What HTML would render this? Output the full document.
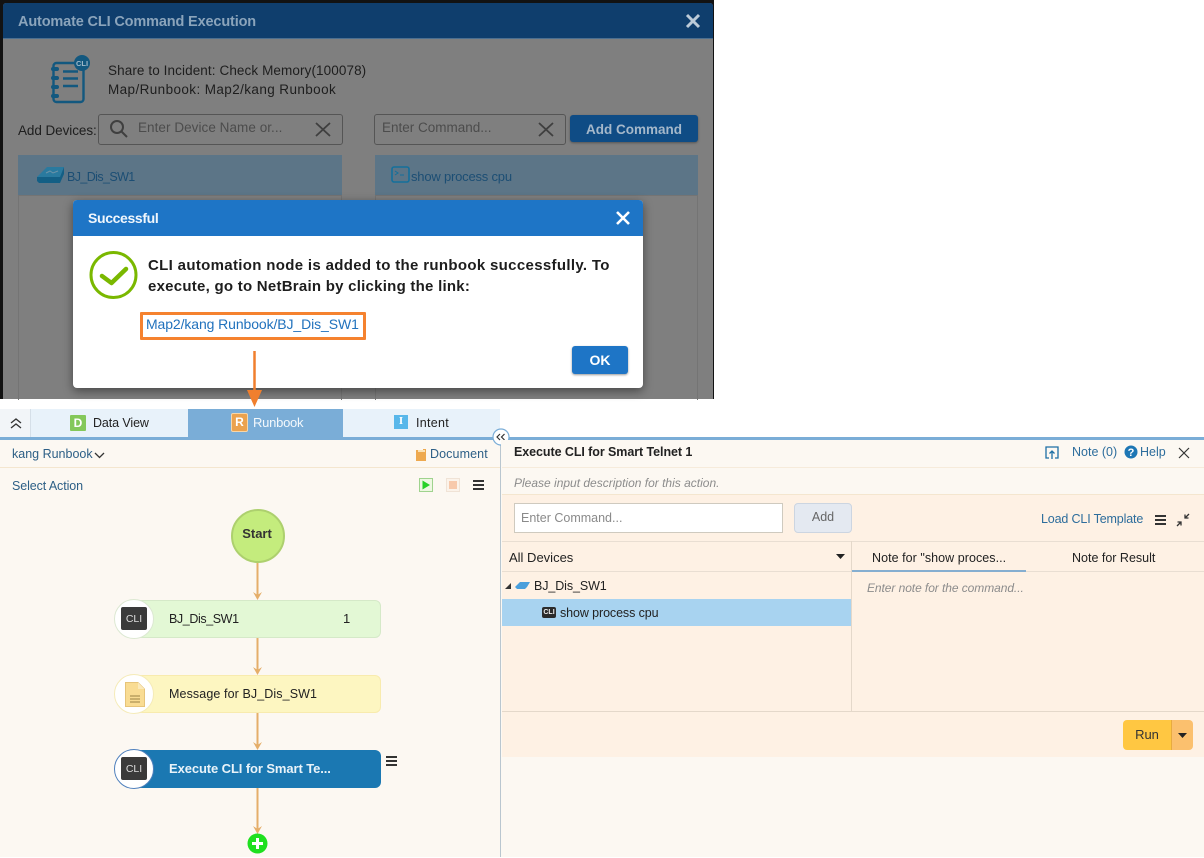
<!DOCTYPE html>
<html><head><meta charset="utf-8"><style>
html,body{margin:0;padding:0;background:#fff}
#p{position:relative;width:1204px;height:858px;overflow:hidden;font-family:"Liberation Sans",sans-serif;background:#fff}
#p div,#p svg{position:absolute}
.t{white-space:nowrap;line-height:18px;height:18px;font-size:13px;color:#222}
</style></head><body><div id="p">
<!-- top dark screen -->
<div style="left:0;top:0;width:714px;height:399px;background:#121212"></div>
<div style="left:3px;top:3px;width:710px;height:396px;background:#7f7f7f;border-radius:3px 3px 0 0"></div>
<div style="left:3px;top:3px;width:710px;height:35px;background:#0f3e6d;border-bottom:1px solid #4c6f90;border-radius:3px 3px 0 0"></div>
<div class="t" style="left:18px;top:13px;font-size:14.5px;font-weight:bold;color:#8ba4bb;letter-spacing:-.15px">Automate CLI Command Execution</div>
<svg style="left:685px;top:13px" width="16" height="16"><path d="M2 2L14 14M14 2L2 14" stroke="#bccbd8" stroke-width="3"/></svg>
<svg style="left:50px;top:54px" width="42" height="50" viewBox="0 0 42 50" fill="none">
<rect x="3.5" y="9" width="30" height="39" rx="3" stroke="#13587f" stroke-width="2.4"/>
<path d="M13 17.500H28M13 24.500H28M13 32H28" stroke="#13587f" stroke-width="2.600"/>
<path d="M3 15h4M3 24h4M3 33h4M3 42h4" stroke="#13587f" stroke-width="4" stroke-linecap="round"/>
<circle cx="32" cy="9" r="8" fill="#13587f"/>
<text x="32" y="12" text-anchor="middle" font-size="7.5" font-weight="bold" fill="#9fb9c9" font-family="Liberation Sans">CLI</text></svg>
<div class="t" style="left:108px;top:62px;font-size:13.5px;color:#1e1e1e;letter-spacing:.1px">Share to Incident: Check Memory(100078)</div>
<div class="t" style="left:108px;top:81px;font-size:13.5px;color:#1e1e1e;letter-spacing:.4px">Map/Runbook: Map2/kang Runbook</div>
<div class="t" style="left:18px;top:122px;font-size:13.5px;color:#1e1e1e;letter-spacing:-.07px">Add Devices:</div>
<div style="left:98px;top:114px;width:243px;height:29px;border:1px solid #555;border-radius:3px"></div>
<svg style="left:108px;top:118px" width="22" height="20" fill="none"><circle cx="9" cy="9" r="6" stroke="#3f3f3f" stroke-width="2"/><path d="M13.5 13.5L19 19" stroke="#3f3f3f" stroke-width="2"/></svg>
<div class="t" style="left:138px;top:119px;font-size:13.5px;color:#4c4c4c;letter-spacing:.05px">Enter Device Name or...</div>
<svg style="left:315px;top:122px" width="16" height="15"><path d="M1 1L15 14M15 1L1 14" stroke="#3f3f3f" stroke-width="1.8"/></svg>
<div style="left:374px;top:114px;width:190px;height:29px;border:1px solid #555;border-radius:3px"></div>
<div class="t" style="left:382px;top:119px;font-size:13.5px;color:#4c4c4c">Enter Command...</div>
<svg style="left:538px;top:122px" width="16" height="15"><path d="M1 1L15 14M15 1L1 14" stroke="#3f3f3f" stroke-width="1.8"/></svg>
<div style="left:570px;top:115px;width:128px;height:27px;background:#0f4c85;border-radius:3px;box-shadow:0 1px 2px #555"></div>
<div class="t" style="left:570px;top:121px;width:128px;text-align:center;font-size:13.5px;font-weight:bold;color:#a5b8ca">Add Command</div>
<div style="left:18px;top:155px;width:324px;height:40px;background:#5c7587"></div>
<div style="left:375px;top:155px;width:323px;height:40px;background:#5c7587"></div>
<div style="left:18px;top:195px;width:322px;height:204px;border:1px solid #747474;border-bottom:0"></div>
<div style="left:375px;top:195px;width:321px;height:204px;border:1px solid #747474;border-bottom:0"></div>
<svg style="left:36px;top:165px" width="30" height="20"><path d="M1 12L11 2H28L24 12Z" fill="#2a7a9f"/><path d="M1 12H24L28 2V9L24 18H3L1 16Z" fill="#135f85"/><path d="M10 8l4-2 3 2 5-2" stroke="#6c93a8" stroke-width="1" fill="none"/></svg>
<div class="t" style="left:67px;top:168px;font-size:12.5px;color:#1c4e74;letter-spacing:-.6px">BJ_Dis_SW1</div>
<svg style="left:391px;top:166px" width="20" height="18" fill="none"><rect x="1" y="1" width="17" height="15" rx="2" stroke="#14709c" stroke-width="1.6"/><path d="M4 5l3 2-3 2M9 9h4" stroke="#14709c"/></svg>
<div class="t" style="left:411px;top:168px;font-size:13px;color:#1c4e74;letter-spacing:-.2px">show process cpu</div>
<!-- success dialog -->
<div style="left:73px;top:200px;width:570px;height:188px;background:#fff;border-radius:4px;box-shadow:0 3px 10px rgba(0,0,0,.45)"></div>
<div style="left:73px;top:200px;width:570px;height:36px;background:#1e75c6;border-radius:4px 4px 0 0"></div>
<div class="t" style="left:88px;top:209px;font-size:14px;font-weight:bold;color:#f0f6fc;letter-spacing:-.35px">Successful</div>
<svg style="left:615px;top:210px" width="16" height="16"><path d="M2 2L14 14M14 2L2 14" stroke="#fff" stroke-width="2.6"/></svg>
<svg style="left:89px;top:250px" width="50" height="50" fill="none"><circle cx="24.500" cy="25" r="22.500" stroke="#7ab800" stroke-width="3"/><path d="M13 26L22.500 33L37 19" stroke="#7ab800" stroke-width="4.500" stroke-linecap="round" stroke-linejoin="round"/></svg>
<div class="t" style="left:148px;top:257px;font-size:15px;font-weight:bold;color:#1d1d1d;letter-spacing:.33px">CLI automation node is added to the runbook successfully. To</div>
<div class="t" style="left:148px;top:278px;font-size:15px;font-weight:bold;color:#1d1d1d;letter-spacing:.25px">execute, go to NetBrain by clicking the link:</div>
<div style="left:140px;top:312px;width:220px;height:22px;border:3px solid #f5822f;border-radius:1px"></div>
<div class="t" style="left:146px;top:315px;font-size:14px;color:#2172bd;letter-spacing:-.1px">Map2/kang Runbook/BJ_Dis_SW1</div>
<div style="left:572px;top:346px;width:56px;height:28px;background:#1e75c6;border-radius:3px;box-shadow:0 1px 2px #999"></div>
<div class="t" style="left:572px;top:351px;width:56px;text-align:center;font-size:14px;font-weight:bold;color:#fff">OK</div>
<!-- tabs -->
<div style="left:0;top:409px;width:500px;height:28px;background:#e8f2fa"></div>
<div style="left:0;top:409px;width:30px;height:28px;background:#f2f5f8;border-right:1px solid #d5dfe8"></div>
<svg style="left:9px;top:417px" width="14" height="13" fill="none"><path d="M2 6L7 2L12 6M2 11L7 7L12 11" stroke="#333" stroke-width="1.3"/></svg>
<div style="left:188px;top:409px;width:155px;height:28px;background:#7aadd7"></div>
<div style="left:70px;top:415px;width:16px;height:16px;background:#84c85a;border-radius:1px;color:#fff;font-size:12px;font-weight:bold;text-align:center;line-height:16px">D</div>
<div class="t" style="left:93px;top:414px;font-size:12.5px;color:#222;letter-spacing:-.1px">Data View</div>
<div style="left:231px;top:413px;width:15px;height:17px;background:#eba24e;border:1px solid #f7d6a8;border-radius:2px;color:#fff;font-size:12px;font-weight:bold;text-align:center;line-height:17px">R</div>
<div class="t" style="left:253px;top:414px;font-size:13px;color:#f3f8fc;letter-spacing:-.25px">Runbook</div>
<div style="left:394px;top:415px;width:14px;height:14px;background:#58b7ea;color:#fff;font-size:11px;font-weight:bold;text-align:center;line-height:13px;font-family:'Liberation Serif',serif">I</div>
<div class="t" style="left:416px;top:414px;font-size:12.5px;color:#222;letter-spacing:.3px">Intent</div>
<div style="left:0;top:437px;width:1204px;height:3px;background:#7aadd7"></div>
<!-- left panel -->
<div style="left:0;top:440px;width:500px;height:418px;background:#fcf8f2"></div>
<div style="left:0;top:467px;width:500px;height:1px;background:#f4e6cf"></div>
<div style="left:500px;top:440px;width:1px;height:418px;background:#b9c6cf"></div>
<div class="t" style="left:12px;top:445px;font-size:12.5px;color:#2d5f86">kang Runbook</div>
<svg style="left:94px;top:451px" width="12" height="8" fill="none"><path d="M1 2L5.5 6.5L10 2" stroke="#333" stroke-width="1.3"/></svg>
<svg style="left:415px;top:448px" width="12" height="14"><path d="M1 2H8V1H11V13H1Z" fill="#eea94f"/><rect x="3" y="2" width="7" height="2" fill="#fbe2b5"/></svg>
<div class="t" style="left:430px;top:445px;font-size:12.5px;color:#2d5f86;letter-spacing:.1px">Document</div>
<div class="t" style="left:12px;top:477px;font-size:12.5px;color:#2d5f86;letter-spacing:-.1px">Select Action</div>
<svg style="left:419px;top:478px" width="14" height="14"><rect x=".5" y=".5" width="13" height="13" fill="#eef8e2" stroke="#9fd38e"/><path d="M3.5 2.5L11 7L3.5 11.5Z" fill="#27d127"/></svg>
<svg style="left:446px;top:478px" width="14" height="14"><rect x=".5" y=".5" width="13" height="13" fill="#fbf3ea" stroke="#f0e3d6"/><rect x="3" y="3" width="8" height="8" fill="#f7c9ab"/></svg>
<svg style="left:473px;top:480px" width="11" height="10"><path d="M0 1H11M0 5H11M0 9H11" stroke="#333" stroke-width="1.9"/></svg>
<!-- collapse -->
<svg style="left:492px;top:428px" width="18" height="18" fill="none"><circle cx="9" cy="9" r="8" fill="#fff" stroke="#7aadd7" stroke-width="1.2"/><path d="M8 6L5 9L8 12M12.5 6L9.5 9L12.5 12" stroke="#333" stroke-width="1.2"/></svg>
<!-- flow -->
<svg style="left:100px;top:500px" width="300" height="358" fill="none">
<path d="M157.500 61V98M157.500 137V173M157.500 212V248M157.500 288V332" stroke="#e5ae6a" stroke-width="2"/>
<path d="M153 92L157.500 95L162 92L157.500 100ZM153 167L157.500 170L162 167L157.500 175ZM153 242L157.500 245L162 242L157.500 250ZM153 326L157.500 329L162 326L157.500 334Z" fill="#e5ae6a"/>
</svg>
<div style="left:231px;top:509px;width:50px;height:50px;border:2px solid #add06e;border-radius:50%;background:#c4ec7d"></div>
<div class="t" style="left:230px;top:525px;width:54px;text-align:center;font-size:13px;font-weight:bold;color:#333">Start</div>
<div style="left:130px;top:600px;width:249px;height:36px;background:#e3f8d5;border:1px solid #d5e9c8;border-radius:6px"></div>
<div style="left:114px;top:599px;width:38px;height:38px;border:1px solid #dce8d2;border-radius:50%;background:#fff"></div>
<div style="left:121px;top:607px;width:26px;height:23px;background:#3a3a3a;border-radius:2px;color:#ddd;font-size:10.5px;text-align:center;line-height:25px">CLI</div>
<div class="t" style="left:169px;top:610px;font-size:12.5px;color:#222;letter-spacing:-.4px">BJ_Dis_SW1</div>
<div class="t" style="left:343px;top:610px;font-size:13px;color:#222">1</div>
<div style="left:130px;top:675px;width:249px;height:36px;background:#fdf6c1;border:1px solid #f8ebae;border-radius:6px"></div>
<div style="left:114px;top:674px;width:38px;height:38px;border:1px solid #f5ebb8;border-radius:50%;background:#fff"></div>
<svg style="left:124px;top:681px" width="22" height="28"><path d="M1.500 1.500H14L20.500 8V25.500H1.500Z" fill="#f9dc93" stroke="#e6c47a"/><path d="M14 1.500V8H20.500" fill="#fbe9b9"/><path d="M6 15H16M6 18H16M6 21H16" stroke="#9a8246"/></svg>
<div class="t" style="left:169px;top:685px;font-size:12.5px;color:#222;letter-spacing:.1px">Message for BJ_Dis_SW1</div>
<div style="left:130px;top:750px;width:251px;height:38px;background:#1b78b2;border-radius:6px"></div>
<div style="left:114px;top:749px;width:38px;height:38px;border:1px solid #4f80bd;border-radius:50%;background:#fff"></div>
<div style="left:121px;top:757px;width:26px;height:23px;background:#3a3a3a;border-radius:2px;color:#ddd;font-size:10.5px;text-align:center;line-height:25px">CLI</div>
<div class="t" style="left:169px;top:760px;font-size:13px;font-weight:bold;color:#e9f3f9;letter-spacing:-.1px">Execute CLI for Smart Te...</div>
<svg style="left:386px;top:756px" width="11" height="10"><path d="M0 1H11M0 5H11M0 9H11" stroke="#333" stroke-width="1.9"/></svg>
<svg style="left:247px;top:833px" width="21" height="21"><circle cx="10.500" cy="10.500" r="10" fill="#1fe01f"/><path d="M10.500 5V16M5 10.500H16" stroke="#fff" stroke-width="3"/></svg>
<!-- right panel -->
<div style="left:501px;top:440px;width:703px;height:418px;background:#fcf8f2"></div>
<div style="left:502px;top:467px;width:702px;height:1px;background:#f6ebdb"></div>
<div style="left:502px;top:494px;width:702px;height:263px;background:#fef1e4"></div>
<div style="left:502px;top:494px;width:702px;height:1px;background:#f4e6cf"></div>
<div style="left:502px;top:541px;width:702px;height:1px;background:#e9ded2"></div>
<div style="left:502px;top:571px;width:702px;height:1px;background:#e9ded2"></div>
<div style="left:502px;top:711px;width:702px;height:1px;background:#e4d8ca"></div>
<div style="left:851px;top:541px;width:1px;height:170px;background:#e4d8ca"></div>
<div class="t" style="left:514px;top:443px;font-size:12.5px;font-weight:bold;color:#222;letter-spacing:-.07px">Execute CLI for Smart Telnet 1</div>
<svg style="left:1044px;top:445px" width="16" height="15" fill="none"><path d="M5 13H2V2H14V13H11" stroke="#1d6fa5" stroke-width="1.3"/><path d="M8 14V6M5.500 8.500L8 6L10.500 8.500" stroke="#1d6fa5" stroke-width="1.300"/></svg>
<div class="t" style="left:1072px;top:443px;font-size:12.5px;color:#2d6d9c">Note (0)</div>
<svg style="left:1124px;top:445px" width="14" height="14"><circle cx="7" cy="7" r="6.500" fill="#1d76b4"/><text x="7" y="11" text-anchor="middle" font-size="11" font-weight="bold" fill="#fff" font-family="Liberation Sans">?</text></svg>
<div class="t" style="left:1140px;top:443px;font-size:12.5px;color:#2d6d9c">Help</div>
<svg style="left:1178px;top:447px" width="12" height="12"><path d="M1 1L11 11M11 1L1 11" stroke="#333" stroke-width="1.2"/></svg>
<div class="t" style="left:514px;top:474px;font-size:12px;font-style:italic;color:#8c8c8c">Please input description for this action.</div>
<div style="left:514px;top:503px;width:267px;height:28px;background:#fff;border:1px solid #cfcabf"></div>
<div class="t" style="left:521px;top:509px;font-size:12.5px;color:#8a8a8a">Enter Command...</div>
<div style="left:794px;top:503px;width:56px;height:28px;background:#e4e9f1;border:1px solid #ccd5e1;border-radius:4px"></div>
<div class="t" style="left:794px;top:508px;width:58px;text-align:center;font-size:12.5px;color:#666">Add</div>
<div class="t" style="left:1041px;top:510px;font-size:12.5px;color:#2d6d9c;letter-spacing:-.15px">Load CLI Template</div>
<svg style="left:1155px;top:515px" width="11" height="10"><path d="M0 1H11M0 5H11M0 9H11" stroke="#333" stroke-width="1.9"/></svg>
<svg style="left:1176px;top:513px" width="14" height="14" fill="none"><path d="M13 1L9 5M9 1.500V5H12.500M1 13L5 9M5 12.500V9H1.500" stroke="#333" stroke-width="1.300"/></svg>
<div class="t" style="left:509px;top:549px;font-size:13px;color:#222">All Devices</div>
<svg style="left:836px;top:554px" width="9" height="6"><path d="M0 0H9L4.500 5Z" fill="#222"/></svg>
<div class="t" style="left:872px;top:549px;font-size:12.5px;color:#222;letter-spacing:.05px">Note for "show proces...</div>
<div class="t" style="left:1072px;top:549px;font-size:12.5px;color:#222">Note for Result</div>
<div style="left:852px;top:570px;width:174px;height:2px;background:#85aed0"></div>
<div class="t" style="left:867px;top:579px;font-size:12px;font-style:italic;color:#8c8c8c;letter-spacing:-.07px">Enter note for the command...</div>
<svg style="left:504px;top:582px" width="8" height="8"><path d="M7 1V7H1Z" fill="#333"/></svg>
<svg style="left:515px;top:581px" width="16" height="9"><path d="M0 6L5 1H15L12 6L10 8H2Z" fill="#4a9fdc"/></svg>
<div class="t" style="left:534px;top:577px;font-size:12.5px;color:#222;letter-spacing:-.1px">BJ_Dis_SW1</div>
<div style="left:502px;top:599px;width:349px;height:27px;background:#a8d3f0"></div>
<div style="left:542px;top:607px;width:14px;height:11px;background:#2b2b2b;border-radius:2px;color:#eee;font-size:7px;font-weight:bold;text-align:center;line-height:11px">CLI</div>
<div class="t" style="left:560px;top:604px;font-size:12.5px;color:#222;letter-spacing:-.1px">show process cpu</div>
<div style="left:1123px;top:720px;width:48px;height:30px;background:#ffc742;border-radius:4px 0 0 4px"></div>
<div style="left:1171px;top:720px;width:22px;height:30px;background:#fbc06e;border-left:1px solid #e8ab3f;box-sizing:border-box;border-radius:0 4px 4px 0"></div>
<div class="t" style="left:1123px;top:726px;width:48px;text-align:center;font-size:13px;color:#333">Run</div>
<svg style="left:1178px;top:733px" width="9" height="6"><path d="M0 0H9L4.500 5Z" fill="#222"/></svg>
<!-- arrow -->
<svg style="left:244px;top:349px" width="22" height="60"><path d="M10.500 2V44" stroke="#f07f2e" stroke-width="2.500"/><path d="M3 41H18L10.500 58Z" fill="#f07f2e"/></svg>
<div style="left:0;top:857px;width:1204px;height:1px;background:#fff"></div>
</div></body></html>
